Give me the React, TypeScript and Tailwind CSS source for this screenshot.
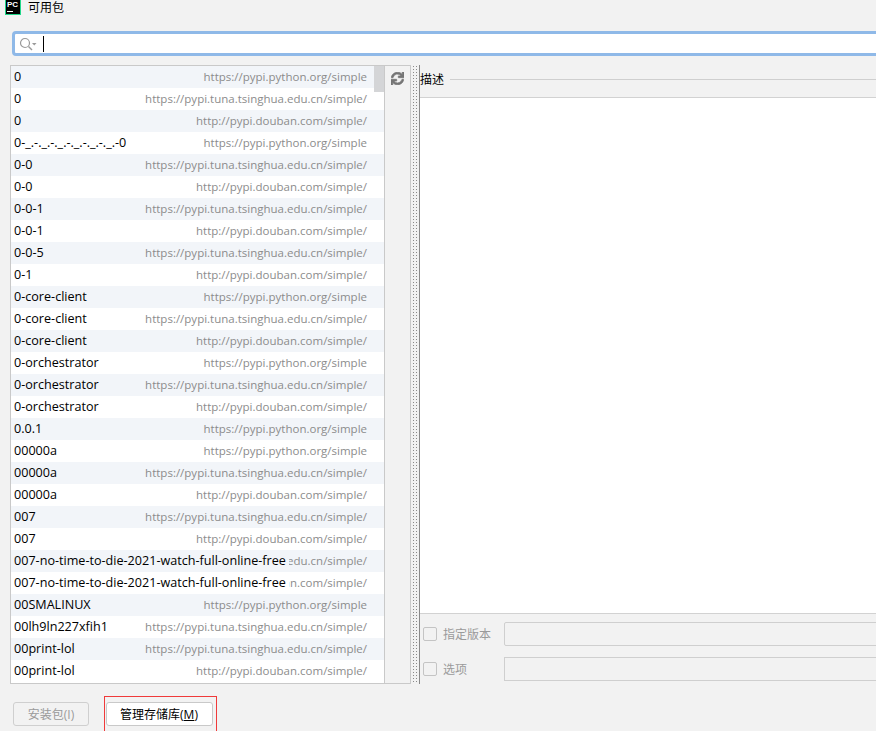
import React from 'react';
import { FaSync } from 'react-icons/fa';

const PY = 'https://pypi.python.org/simple';
const TUNA = 'https://pypi.tuna.tsinghua.edu.cn/simple/';
const DOUBAN = 'http://pypi.douban.com/simple/';

const packages: [string, string][] = [
  ['0', PY],
  ['0', TUNA],
  ['0', DOUBAN],
  ['0-_.-._.-._.-._.-._.-._.-0', PY],
  ['0-0', TUNA],
  ['0-0', DOUBAN],
  ['0-0-1', TUNA],
  ['0-0-1', DOUBAN],
  ['0-0-5', TUNA],
  ['0-1', DOUBAN],
  ['0-core-client', PY],
  ['0-core-client', TUNA],
  ['0-core-client', DOUBAN],
  ['0-orchestrator', PY],
  ['0-orchestrator', TUNA],
  ['0-orchestrator', DOUBAN],
  ['0.0.1', PY],
  ['00000a', PY],
  ['00000a', TUNA],
  ['00000a', DOUBAN],
  ['007', TUNA],
  ['007', DOUBAN],
  ['007-no-time-to-die-2021-watch-full-online-free', TUNA],
  ['007-no-time-to-die-2021-watch-full-online-free', DOUBAN],
  ['00SMALINUX', PY],
  ['00lh9ln227xfih1', TUNA],
  ['00print-lol', TUNA],
  ['00print-lol', DOUBAN],
];

// 左上角的 PyCharm 图标
const PcLogo: React.FC = () => (
  <div className="w-[16px] h-[16px] -mt-[1px] bg-black border border-[#21d789] flex flex-col px-[1px] overflow-hidden">
    <span className="text-white text-[8px] leading-[9px] font-bold font-['Liberation_Sans',sans-serif]">PC</span>
    <span className="w-[6px] h-[1px] mt-[2px] bg-white" />
  </div>
);

const SearchIcon: React.FC = () => (
  <svg width="18" height="14" viewBox="0 0 18 14" fill="none" className="shrink-0">
    <circle cx="6" cy="6" r="4.5" stroke="#9a9a9a" strokeWidth="1.2" />
    <path d="M9.5 9.5 L13 13" stroke="#9a9a9a" strokeWidth="1.4" />
    <path d="M13 6 H17.5 L15.25 8.5 Z" fill="#9a9a9a" />
  </svg>
);

const PackageRow: React.FC<{ name: string; repo: string; even: boolean }> = ({ name, repo, even }) => {
  const bg = even ? 'bg-[#f2f5f9]' : 'bg-white';
  return (
    <div className={`relative h-[22px] flex items-center justify-end pr-[17px] ${bg}`}>
      <span className="text-[11.5px] text-[#8c8c8c] whitespace-nowrap">{repo}</span>
      <span className={`absolute left-0 top-0 h-[22px] pl-[3px] pr-[3px] leading-[22px] text-[12.6px] text-black whitespace-nowrap ${bg}`}>
        {name}
      </span>
    </div>
  );
};

export default function App() {
  return (
    <div className="w-[876px] h-[731px] overflow-hidden bg-[#f2f2f2] flex flex-col font-['Open_Sans','Noto_Sans_CJK_SC',sans-serif] text-[13px]">
      {/* Title */}
      <div className="h-[15px] flex items-center pl-[5px] gap-[7px] shrink-0">
        <PcLogo />
        <span className="text-[12px] leading-[14px] pt-[1px] text-black">可用包</span>
      </div>

      {/* Search */}
      <div className="h-[25px] mt-[16px] ml-[12px] -mr-[10px] shrink-0 rounded-[4px] border-[3px] border-[#8fb9e8] bg-white flex items-center pl-[4px]">
        <SearchIcon />
        <span className="ml-[6px] w-[1px] h-[16px] bg-black" />
      </div>

      {/* Main */}
      <div className="flex h-[619px] mt-[9px] ml-[10px] shrink-0">
        <div className="w-[375px] h-full border border-[#c9c9c9] flex bg-white shrink-0">
          <div className="flex-1 min-w-0 overflow-hidden">
            {packages.map((p, i) => (
              <PackageRow key={i} name={p[0]} repo={p[1]} even={i % 2 === 0} />
            ))}
          </div>
          <div className="w-[10px] bg-transparent shrink-0 -ml-[10px] relative">
            <div className="w-[10px] h-[26px] bg-[#d4d5d7]" />
          </div>
        </div>

        {/* Toolbar */}
        <div className="w-[26px] h-full border-y border-r border-[#c9c9c9] flex justify-center pt-[6px] shrink-0">
          <FaSync size={13} stroke="currentColor" strokeWidth={30} className="text-[#757575]" />
        </div>

        {/* Splitter */}
        <div className="w-[8px] h-full ml-[1px] shrink-0 border-r border-[#8a8a8a] bg-[radial-gradient(#8a8a8a_1px,transparent_1px)] bg-[length:3px_3px]" />

        {/* Right panel */}
        <div className="flex-1 min-w-0 flex flex-col">
          <div className="h-[29px] mb-[3px] flex items-center shrink-0">
            <span className="text-[12px] text-black">描述</span>
            <div className="flex-1 h-[1px] ml-[6px] bg-[#cfcfcf]" />
          </div>
          <div className="h-[517px] bg-white border-y border-[#d2d2d2] shrink-0" />
          <div className="flex flex-col gap-[11px] pt-[8px] pl-[3px]">
            <div className="flex items-center h-[24px]">
              <span className="w-[14px] h-[14px] rounded-[2px] border border-[#c4c4c4] bg-[#f2f2f2] shrink-0" />
              <span className="ml-[6px] w-[61px] pt-[2px] text-[12px] text-[#9a9a9a]">指定版本</span>
              <div className="flex-1 h-[24px] rounded-[2px] border border-[#cfcfcf] -mr-[10px]" />
            </div>
            <div className="flex items-center h-[24px]">
              <span className="w-[14px] h-[14px] rounded-[2px] border border-[#c4c4c4] bg-[#f2f2f2] shrink-0" />
              <span className="ml-[6px] w-[61px] pt-[2px] text-[12px] text-[#9a9a9a]">选项</span>
              <div className="flex-1 h-[24px] border border-[#cfcfcf] -mr-[10px]" />
            </div>
          </div>
        </div>
      </div>

      {/* Buttons */}
      <div className="flex mt-[12px] ml-[13px]">
        <button className="w-[76px] h-[24px] mt-[6px] pt-[1px] rounded-[3px] border border-[#cfcfcf] bg-[#f2f2f2] text-[12px] text-[#9a9a9a]">
          安装包(I)
        </button>
        <div className="ml-[15px] w-[113px] h-[40px] border border-[#f03a3a] flex pl-[1px] pt-[5px]">
          <button className="w-[107px] h-[24px] pt-[1px] pr-[1px] rounded-[3px] border border-[#c9c9c9] bg-white text-[12px] text-black">
            管理存储库(<span className="underline">M</span>)
          </button>
        </div>
      </div>
    </div>
  );
}
